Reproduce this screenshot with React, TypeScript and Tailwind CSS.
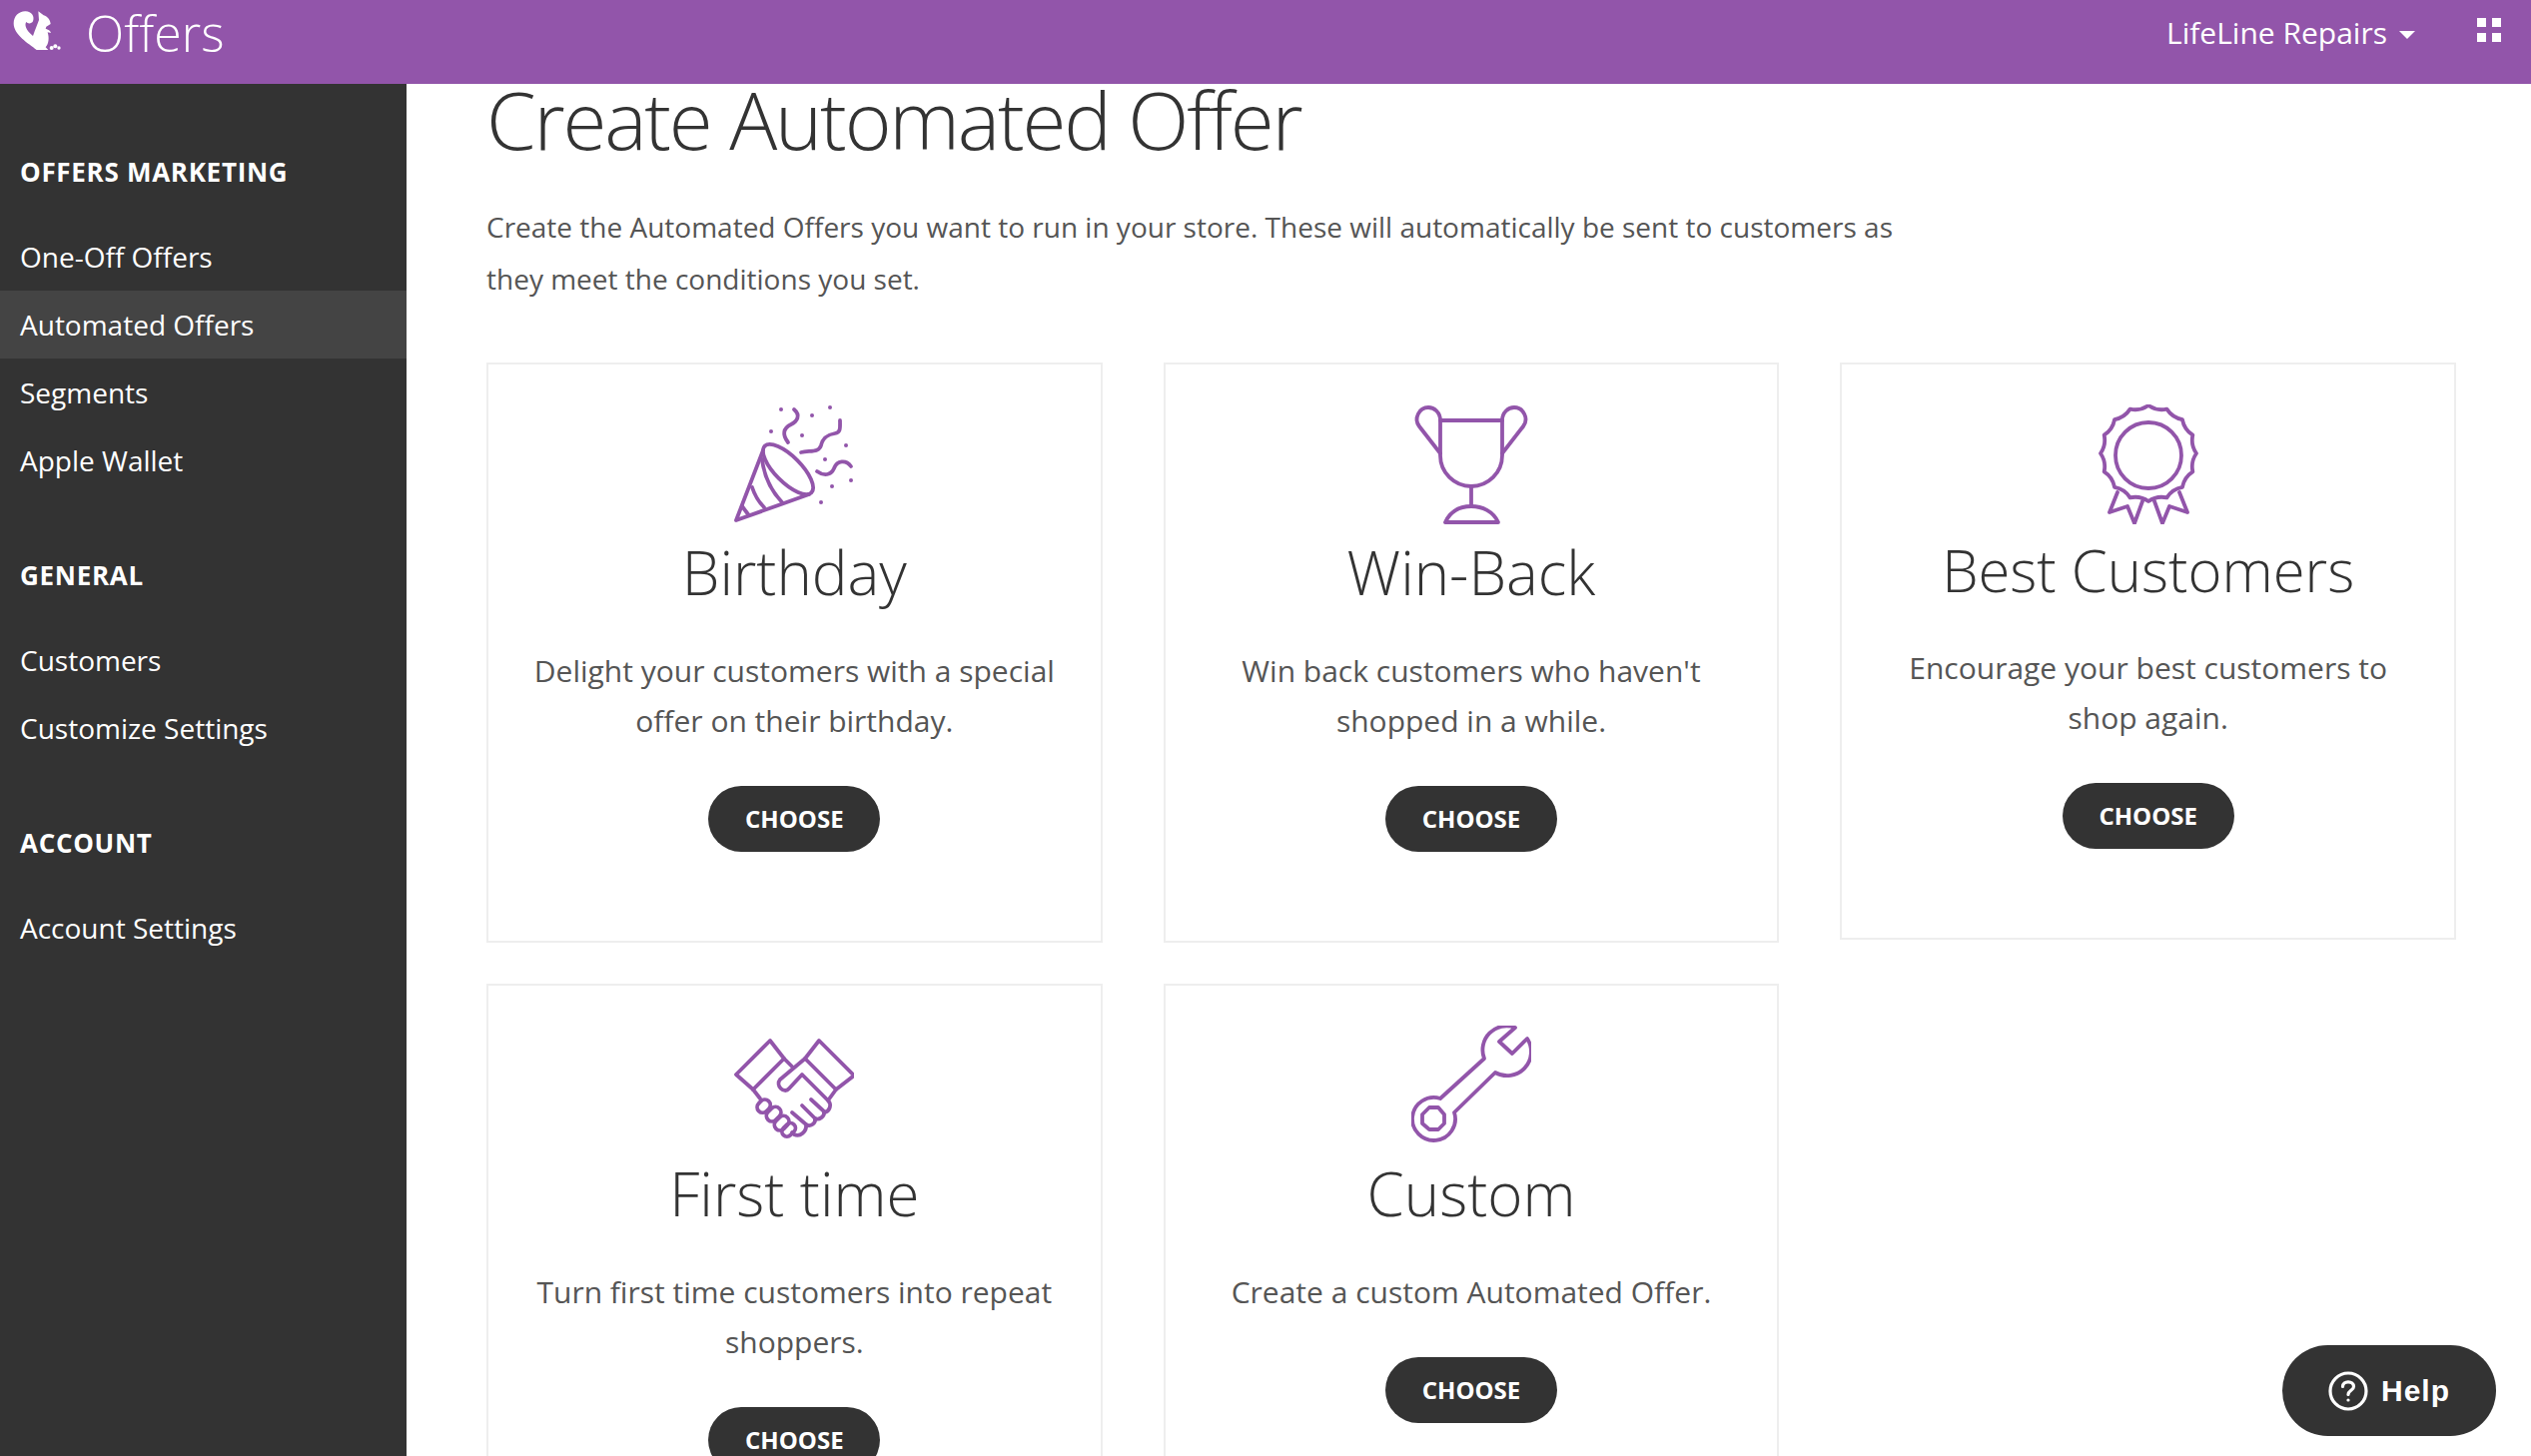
import React from "react";

const openSans = { fontFamily: '"Open Sans", sans-serif' };

function Squirrel() {
  return (
    <svg width="65" height="60" viewBox="0 0 195 180" className="shrink-0">
      <path
        fill="#fff"
        d="M95 150C70 130 26 105 26 70C26 48 43 33 62 34C80 35 90 50 84 64C80 72 68 72 64 66C58 74 62 90 84 108C90 90 98 72 102 60L100 34L116 46C128 50 136 60 137 72L124 80L122 86C129 88 137 92 138 99L128 97C133 112 132 132 122 142L130 150Z"
      />
      <circle cx="140" cy="144" r="6" fill="#fff" />
      <circle cx="151" cy="139" r="6" fill="#fff" />
      <circle cx="162" cy="144" r="5" fill="#fff" />
    </svg>
  );
}

function Popper() {
  const dots = [
    [82, 30], [113, 36], [131, 28], [72, 52], [103, 56],
    [147, 66], [126, 80], [152, 101], [133, 107], [122, 123],
  ];
  return (
    <svg width="120" height="120" viewBox="35 25 120 120" fill="none" stroke="#9255AA" strokeWidth="3.8" strokeLinecap="round" strokeLinejoin="round">
      <ellipse cx="89" cy="90" rx="33" ry="13" transform="rotate(45 89 90)" />
      <path d="M64 71L37 141L110 115" />
      <path d="M63 80Q66 105 83 123" />
      <path d="M53 108Q57 120 65 128" />
      <path d="M43 127L49 135" />
      <path d="M95 30C102 36 98 42 92 45C84 49 83 55 89 63" />
      <path d="M102 73C112 71 120 73 122 66C124 57 130 55 136 54C142 53 141 48 141 41" />
      <path d="M118 92C125 97 132 96 135 89C138 81 147 80 152 87" />
      {dots.map(([x, y]) => (
        <circle key={`${x}-${y}`} cx={x} cy={y} r="2" fill="#9255AA" stroke="none" />
      ))}
    </svg>
  );
}

function Trophy() {
  return (
    <svg width="120" height="120" viewBox="23 15 120 120" fill="none" stroke="#9255AA" strokeWidth="3.8" strokeLinecap="round" strokeLinejoin="round">
      <path d="M52 31H114V66A31 31 0 0 1 52 66Z" />
      <path d="M52 31C52 23 46 18 40 18C31 18 25 29 31 37L52 64" />
      <path d="M114 31C114 23 120 18 126 18C135 18 141 29 135 37L114 64" />
      <path d="M83 97V117" />
      <path d="M57 133H110C105 122 94 117 83 117C72 117 62 122 57 133Z" />
    </svg>
  );
}

// scalloped edge of the rosette
function scallopPath(cx: number, cy: number, r: number, lumps: number) {
  let d = "";
  for (let i = 0; i <= lumps; i++) {
    const a = (i / lumps) * Math.PI * 2 - Math.PI / 2;
    const x = cx + r * Math.cos(a);
    const y = cy + r * Math.sin(a);
    if (i === 0) {
      d += `M${x.toFixed(2)} ${y.toFixed(2)}`;
    } else {
      const m = a - Math.PI / lumps;
      const qx = cx + (r - 5) * Math.cos(m);
      const qy = cy + (r - 5) * Math.sin(m);
      d += `Q${qx.toFixed(2)} ${qy.toFixed(2)} ${x.toFixed(2)} ${y.toFixed(2)}`;
    }
  }
  return d + "Z";
}

function Rosette() {
  return (
    <svg width="120" height="120" viewBox="11 15 120 120" fill="none" stroke="#9255AA" strokeWidth="3.8" strokeLinecap="round" strokeLinejoin="round">
      <path d={scallopPath(71, 64, 48, 16)} />
      <circle cx="71" cy="66" r="33" />
      <path d="M40 103L32 123L50 117L57 134L65 112" />
      <path d="M102 103L110 123L92 117L85 134L77 112" />
    </svg>
  );
}

function Handshake() {
  return (
    <svg width="120" height="120" viewBox="25 9 120 120" fill="none" stroke="#9255AA" strokeWidth="3.8" strokeLinecap="round" strokeLinejoin="round">
      <path d="M61 24L27 58L44 73L75 42Z" />
      <path d="M110 24L145 59L127 73L96 42Z" />
      <path d="M75 42L83 50" />
      <path d="M96 42L71 63C66 69 75 78 80 72L93 58L119 84C123 88 121 95 115 96" />
      <path d="M127 73L119 84" />
      <path d="M102 83L115 95C116 100 110 104 106 102L93 89" />
      <path d="M106 102C107 107 101 111 97 108L83 96" />
      <path d="M97 108C98 115 91 121 85 118L83 116" />
      <path d="M44 73L51 82" />
      <rect x="48" y="84" width="14" height="11" rx="5.5" transform="rotate(-45 55 90)" />
      <rect x="57" y="92" width="16" height="11" rx="5.5" transform="rotate(-45 65 98)" />
      <rect x="65" y="101" width="16" height="11" rx="5.5" transform="rotate(-45 73 107)" />
      <rect x="72" y="108" width="15" height="10" rx="5" transform="rotate(-45 80 113)" />
    </svg>
  );
}

function Wrench() {
  return (
    <svg width="120" height="120" viewBox="14 15 120 120" fill="none" stroke="#9255AA" strokeWidth="3.8" strokeLinecap="round" strokeLinejoin="round">
      <path d="M118 17A24 24 0 0 0 87 48L43 88A21.5 21.5 0 1 0 57 102L98 62A24 24 0 0 0 130 28L115 43L102 31Z" />
      <path d="M32 97H41L47 104V113L41 119H32L25 113V104Z" />
    </svg>
  );
}

interface OfferCardProps {
  icon: React.ReactNode;
  title: string;
  text: string;
  iconClass?: string;
  titleClass?: string;
}

function OfferCard({ icon, title, text, iconClass = "pt-[40px] pb-[8px]", titleClass = "text-[60px] mb-[34px]" }: OfferCardProps) {
  return (
    <div className="flex flex-col items-center border-2 border-[#eeeeee] pb-[89px] px-[38px] text-center">
      <div className={iconClass}>{icon}</div>
      <h2 className={`${titleClass} leading-[80px] font-light text-[#333]`}>{title}</h2>
      <p className="text-[30px] leading-[50px] text-[#555] mb-[40px]">{text}</p>
      <button className="h-[66px] w-[172px] rounded-full bg-[#333] text-[24px] font-bold text-white">
        CHOOSE
      </button>
    </div>
  );
}

function NavGroup({ title, items, active }: { title: string; items: string[]; active?: string }) {
  return (
    <div className="mb-[63px]">
      <h3 className="mb-[33px] px-5 text-[26px] font-bold tracking-[0.7px] text-white leading-[36px]">{title}</h3>
      {items.map((item) => (
        <div
          key={item}
          className={`h-[68px] px-5 text-[28px] leading-[68px] text-white ${item === active ? "bg-[#444]" : ""}`}
        >
          {item}
        </div>
      ))}
    </div>
  );
}

export default function App() {
  return (
    <div className="relative flex h-[1458px] flex-col overflow-hidden bg-white" style={openSans}>
      <header className="flex h-[84px] shrink-0 items-center bg-[#9255AA] text-white">
        <div className="ml-[5px] self-start">
          <Squirrel />
        </div>
        <span className="ml-[16px] mb-[18px] text-[50px] font-light leading-[60px]">Offers</span>
        <div className="ml-auto mb-[18px] flex items-center">
          <span className="text-[30px] leading-[40px]">LifeLine Repairs</span>
          <span className="ml-[12px] mt-[4px] h-0 w-0 border-x-[8px] border-t-[8px] border-x-transparent border-t-white" />
          <div className="mb-[6px] ml-[62px] mr-[30px] grid grid-cols-2 gap-[6px]">
            <span className="h-[9px] w-[9px] bg-white" />
            <span className="h-[9px] w-[9px] bg-white" />
            <span className="h-[9px] w-[9px] bg-white" />
            <span className="h-[9px] w-[9px] bg-white" />
          </div>
        </div>
      </header>

      <div className="flex min-h-0 flex-1">
        <aside className="w-[407px] shrink-0 bg-[#333] pt-[70px]">
          <NavGroup
            title="OFFERS MARKETING"
            items={["One-Off Offers", "Automated Offers", "Segments", "Apple Wallet"]}
            active="Automated Offers"
          />
          <NavGroup title="GENERAL" items={["Customers", "Customize Settings"]} />
          <NavGroup title="ACCOUNT" items={["Account Settings"]} />
        </aside>

        <main className="min-w-0 flex-1 pl-[80px] pr-[75px]">
          <h1 className="mt-[-7px] text-[80px] font-light leading-[84px] tracking-[-2.2px] text-[#333]">
            Create Automated Offer
          </h1>
          <p className="mt-[40px] max-w-[1440px] text-[28px] leading-[52px] text-[#555]">
            Create the Automated Offers you want to run in your store. These will automatically be sent to customers as
            they meet the conditions you set.
          </p>
          <div className="mt-[58px] grid grid-cols-3 items-start gap-x-[61px] gap-y-[41px]">
            <OfferCard icon={<Popper />} title="Birthday" text="Delight your customers with a special offer on their birthday." />
            <OfferCard icon={<Trophy />} title="Win-Back" text="Win back customers who haven't shopped in a while." />
            <OfferCard
              icon={<Rosette />}
              title="Best Customers"
              text="Encourage your best customers to shop again."
              iconClass="pt-[40px] pb-[6px]"
              titleClass="text-[58px] mb-[33px]"
            />
            <OfferCard icon={<Handshake />} title="First time" text="Turn first time customers into repeat shoppers." />
            <OfferCard icon={<Wrench />} title="Custom" text="Create a custom Automated Offer." />
          </div>
        </main>
      </div>

      <button className="absolute left-[2285px] top-[1347px] flex h-[91px] w-[214px] items-center justify-center gap-[13px] rounded-full bg-[#333] text-white">
        <svg width="40" height="40" viewBox="0 0 40 40" fill="none" stroke="#fff" strokeWidth="3.2" strokeLinecap="round">
          <circle cx="20" cy="20" r="18" />
          <path d="M14.5 15.5C14.5 12.5 17 10.8 20 10.8C23 10.8 25.5 12.6 25.5 15.4C25.5 19.2 20 19.4 20 23.5" />
          <circle cx="20" cy="29" r="1.6" fill="#fff" stroke="none" />
        </svg>
        <span className="text-[30px] font-bold tracking-[1px]" style={{ fontFamily: '"Liberation Sans", sans-serif' }}>
          Help
        </span>
      </button>
    </div>
  );
}
